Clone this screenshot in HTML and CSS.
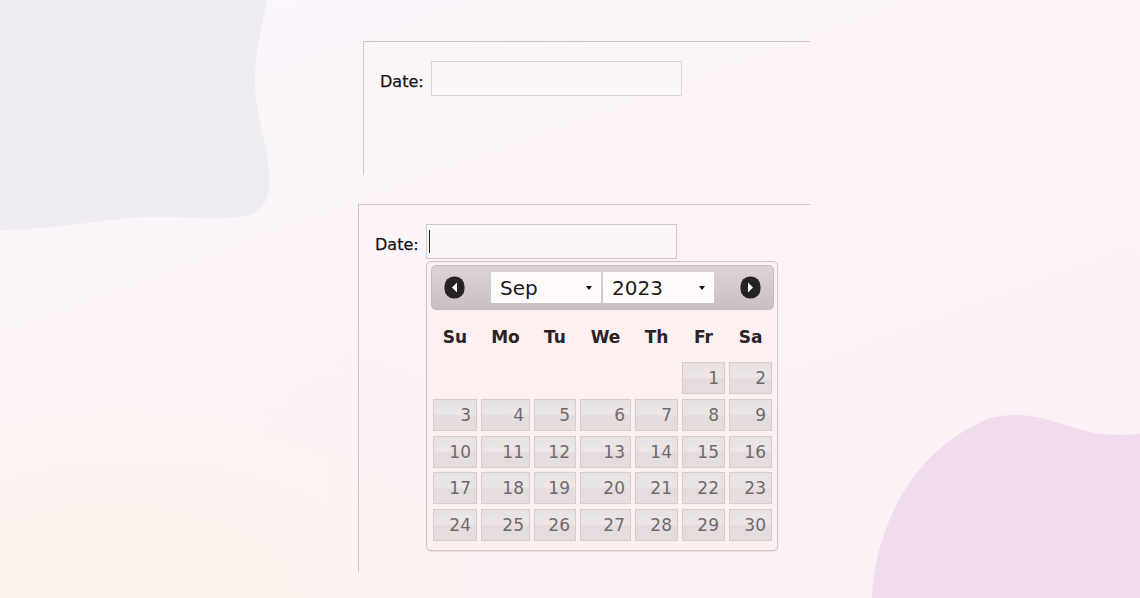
FILE: index.html
```html
<!DOCTYPE html>
<html lang="en">
<head>
<meta charset="utf-8">
<title>Datepicker</title>
<link rel="stylesheet" href="styles.css">
</head>
<body>
<div class="page">
  <svg class="blobs" width="1140" height="598" viewBox="0 0 1140 598" aria-hidden="true">
    <path class="blob-tl" d="M0,0 H267 C262,25 254,55 255,85 C256,115 266,140 269,170 C272,200 262,212 245,216 C215,222 170,214 130,218 C90,222 45,230 0,230 Z"/>
    <path class="blob-br" d="M872,598 C875,530 910,450 990,418 C1030,408 1060,425 1090,432 C1110,436 1130,435 1140,434 V598 Z"/>
  </svg>
  <main class="stage">
    <section class="panel panel-a">
      <div class="field">
        <label class="label">Date:</label>
        <div class="input"></div>
      </div>
    </section>
    <section class="panel panel-b">
      <div class="field">
        <label class="label">Date:</label>
        <div class="input input-focus"><span class="caret"></span></div>
        <div class="datepicker">
          <div class="dp-header">
            <svg class="dp-nav" width="21" height="23" viewBox="0 0 21 23"><rect x="0.5" y="0.5" width="20" height="22" rx="9.5" fill="#272123"/><polygon points="8,11.5 13,6.5 13,16.5" fill="#fff"/></svg>
            <div class="dp-selects">
              <div class="dp-select dp-month"><span>Sep</span><i class="arrow"></i></div>
              <div class="dp-select dp-year"><span>2023</span><i class="arrow"></i></div>
            </div>
            <svg class="dp-nav" width="21" height="23" viewBox="0 0 21 23"><rect x="0.5" y="0.5" width="20" height="22" rx="9.5" fill="#272123"/><polygon points="13,11.5 8,6.5 8,16.5" fill="#fff"/></svg>
          </div>
          <div class="dp-days">
            <span>Su</span><span>Mo</span><span>Tu</span><span>We</span><span>Th</span><span>Fr</span><span>Sa</span>
          </div>
          <div class="dp-grid">
            <span class="empty"></span><span class="empty"></span><span class="empty"></span><span class="empty"></span><span class="empty"></span>
            <a class="day">1</a><a class="day">2</a>
            <a class="day">3</a><a class="day">4</a><a class="day">5</a><a class="day">6</a><a class="day">7</a><a class="day">8</a><a class="day">9</a>
            <a class="day">10</a><a class="day">11</a><a class="day">12</a><a class="day">13</a><a class="day">14</a><a class="day">15</a><a class="day">16</a>
            <a class="day">17</a><a class="day">18</a><a class="day">19</a><a class="day">20</a><a class="day">21</a><a class="day">22</a><a class="day">23</a>
            <a class="day">24</a><a class="day">25</a><a class="day">26</a><a class="day">27</a><a class="day">28</a><a class="day">29</a><a class="day">30</a>
          </div>
        </div>
      </div>
    </section>
  </main>
</div>
</body>
</html>
```

FILE: styles.css
```css
html, body {
  margin: 0;
  padding: 0;
}
body {
  width: 1140px;
  height: 598px;
  overflow: hidden;
  font-family: "DejaVu Sans", Verdana, sans-serif;
}
.page {
  position: relative;
  width: 1140px;
  height: 598px;
  background:
    radial-gradient(ellipse 520px 300px at 120px 620px, rgba(253, 244, 234, 0.9), rgba(253, 244, 234, 0) 100%),
    linear-gradient(160deg, #faf7fb 0%, #fcf3f8 45%, #fcf0f6 100%);
  overflow: hidden;
}
.blobs {
  position: absolute;
  left: 0;
  top: 0;
}
.blob-tl { fill: #f0ecf3; }
.blob-br { fill: #f1ddee; }

.stage {
  position: relative;
  padding: 41px 0 0 358px;
  display: flex;
  flex-direction: column;
  align-items: flex-start;
}
.panel {
  box-sizing: border-box;
  border-top: 1px solid #cdc7cc;
  border-left: 1px solid #cdc7cc;
  padding-left: 16px;
}
.panel-a {
  margin-left: 5px;
  width: 447px;
  height: 134px;
  padding-top: 19px;
}
.panel-b {
  margin-top: 29px;
  width: 452px;
  height: 368px;
  padding-top: 19px;
}
.field {
  position: relative;
  display: flex;
  align-items: center;
  gap: 7px;
}
.label {
  font-size: 16px;
  color: #151214;
  width: 44px;
  white-space: nowrap;
  padding-top: 6px;
  -webkit-text-stroke: 0.25px #151214;
}
.input {
  box-sizing: border-box;
  width: 251px;
  height: 35px;
  border: 1px solid #dcd4d9;
  background: #fcf6f9;
  position: relative;
}
.input-focus {
  border-color: #cfc7cc;
}
.caret {
  position: absolute;
  left: 2px;
  top: 5px;
  width: 1px;
  height: 23px;
  background: #222;
}

/* datepicker */
.datepicker {
  position: absolute;
  left: 51px;
  top: 37px;
  box-sizing: border-box;
  width: 352px;
  height: 290px;
  border: 1px solid #cfc5c7;
  border-radius: 5px;
  background: #fcf0f1;
  padding: 3px 4px 0 4px;
  box-shadow: 0 1px 1px rgba(120, 100, 105, 0.15);
}
.dp-header {
  box-sizing: border-box;
  height: 45px;
  width: 343px;
  display: flex;
  align-items: center;
  padding: 0 12px;
  border: 1px solid #c5bbbe;
  border-radius: 5px;
  background: linear-gradient(to bottom, #dbd3d5 0%, #d2cacc 50%, #c9c0c3 100%);
}
.dp-nav {
  flex: none;
  display: block;
}
.dp-selects {
  flex: 1;
  display: flex;
  justify-content: center;
  gap: 2px;
}
.dp-select {
  box-sizing: border-box;
  height: 31px;
  background: #fffbfb;
  display: flex;
  align-items: center;
  padding: 0 9px;
  font-size: 20px;
  color: #1c1a1c;
  justify-content: space-between;
}
.dp-month { width: 110px; }
.dp-year { width: 111px; }
.arrow {
  width: 0;
  height: 0;
  border-left: 3px solid transparent;
  border-right: 3px solid transparent;
  border-top: 4px solid #111;
  margin-top: 1px;
}
.dp-days,
.dp-grid {
  display: grid;
  grid-template-columns: 44px 49px 42px 51px 43px 43px 43px;
  column-gap: 4px;
  margin-left: 2px;
}
.dp-days {
  height: 52px;
  align-items: center;
  padding-top: 1px;
  box-sizing: border-box;
}
.dp-days span {
  text-align: center;
  font-weight: bold;
  font-size: 17px;
  color: #2b2325;
}
.dp-grid {
  grid-auto-rows: 32px;
  row-gap: 4.75px;
}
.day {
  box-sizing: border-box;
  display: flex;
  align-items: center;
  justify-content: flex-end;
  padding-right: 5px;
  border: 1px solid #d6cdce;
  background: linear-gradient(to bottom, #e8e1e1 0%, #ede6e6 45%, #e4dcdc 55%, #e6dede 100%);
  font-size: 17px;
  color: #716a6c;
}
```
